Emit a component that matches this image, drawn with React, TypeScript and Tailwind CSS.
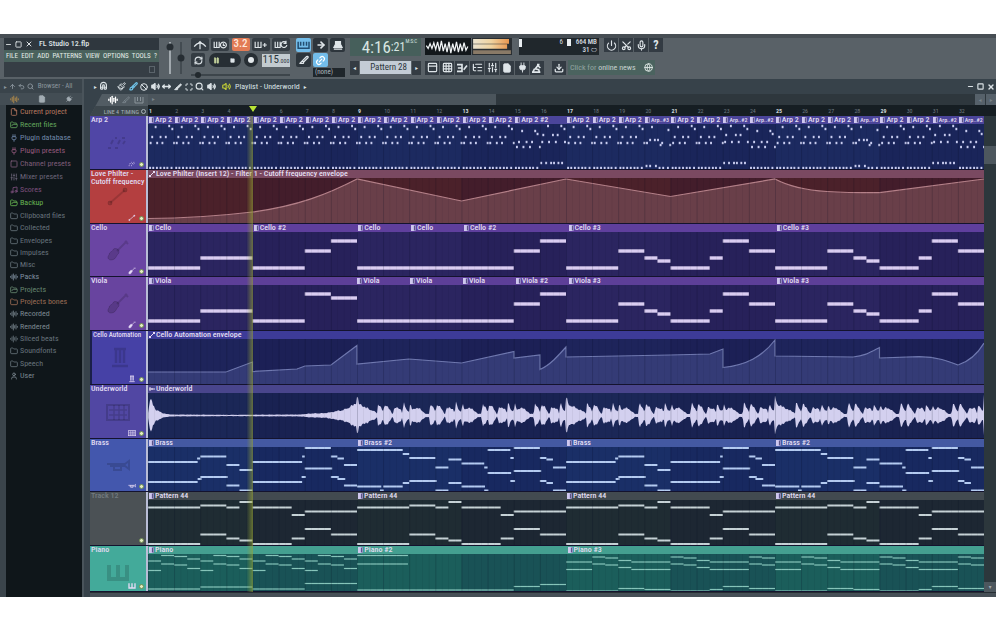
import type { ReactNode } from "react";
import {
  ArrowRight, AudioLines, Ban, Brush, Download, File, Folder, FolderOpen, Globe, Link2, Magnet, Maximize,
  Mic, MoveHorizontal, Music, Paintbrush, Pause, Plug, Power, RefreshCw, Scissors, Search, Slice,
  SlidersVertical, Square, Undo2, User, Volume2, ListTree, PanelTop, Grid3x3, ArrowUp, Minus, X,
} from "lucide-react";

const BAR = 26.125;
const LANE = BAR * 32;

type Note = [number, number, number];
type Clip = [string, number];

const shift = (notes: Note[], by: number): Note[] => notes.map(([a, b, y]) => [a + by, b + by, y]);

const stringTail: Note[] = [
  [16, 18, 36], [18, 19, 19], [19, 19.5, 26], [19.5, 20, 29], [20, 21.5, 36], [21.5, 22, 26], [22, 23, 9], [23, 24, 19],
];
const strings: Note[] = [
  [0, 2, 36], [2, 4, 26], [4, 6, 36], [6, 7, 19], [7, 8, 9], [8, 14, 36], [14, 15, 19], [15, 16, 9],
  ...stringTail, ...shift(stringTail, 8),
];
const viola: Note[] = strings.map(([a, b, y]) => (a === 6 ? [a, b, 9] : a === 7 ? [a, b, 13] : [a, b, y]));

const brassA: Note[] = [
  [0, 1.9, 15], [1.88, 2, 11.5], [2, 3, 9.5], [3, 3.5, 18], [3.5, 4, 23], [4, 5.9, 15], [5.9, 6, 9.5], [6, 7, 1],
  [7, 7.25, 9.5], [7.25, 7.5, 11.5], [7.5, 8, 18], [0, 1.9, 35], [1.9, 2.05, 32], [2, 3.05, 30], [3, 3.5, 38.5],
  [3.5, 4, 43.5], [4, 5.9, 35], [5.88, 6.04, 30], [6, 7.05, 21.5], [7, 7.3, 30], [7.25, 7.55, 32], [7.5, 8, 38.5],
];
const brassB: Note[] = [
  [0, 1.75, 3], [1.75, 2, 7], [2, 3, 11], [3, 3.5, 20.5], [3.5, 4, 12.5], [4, 4.87, 16.5], [4.87, 5, 20.5], [5, 5.87, 3],
  [5.87, 6, 11], [6, 7, 1], [7, 7.25, 11], [7.25, 7.5, 12.5], [7.5, 8, 20.5], [0, 0.93, 39.5], [0.88, 1.03, 43.5],
  [1, 1.75, 39.5], [1.75, 2, 36], [2, 3.05, 34], [3, 3.5, 43.5], [3.5, 4, 36], [4, 4.9, 39.5], [4.87, 5.03, 43.5],
  [5, 5.9, 26], [5.87, 6.05, 34], [6, 7.05, 24], [7, 7.25, 34], [7.25, 7.5, 36], [7.5, 8, 43.5],
];
const brass = [...brassA, ...shift(brassB, 8), ...shift(brassA, 16), ...shift(brassB, 24)];

const horns: Note[] = [
  [0, 2, 7.5], [2, 3, 5.5], [3, 3.5, 7.5], [3.5, 4, 2], [4, 5.5, 7.5], [5.5, 6, 15], [6, 8, 11.5],
  [0, 2, 44], [2, 3, 34.5], [3, 3.5, 38.5], [3.5, 4, 40.5], [4, 5.5, 44], [5.5, 6, 38.5], [6, 7, 29], [7, 8, 34.5],
];
const pattern44 = [0, 8, 16, 24].flatMap((b) => shift(horns, b));

const pianoA: Note[] = [
  [0, 0.5, 7], [0.5, 1, 1.5], [1, 1.5, 2.5], [1.5, 2, 5], [0, 0.5, 16.5], [0.5, 1, 10], [1, 1.5, 11], [1.5, 2, 14.5],
];
const pianoB: Note[] = [
  [0, 1, 8], [1, 1.5, 3], [1.5, 2, 4], [2, 2.5, 6.5], [2.5, 4, 8], [4, 4.5, 3], [4.5, 5, 4], [5, 5.5, 6.5], [5.5, 7, 8],
  [7, 7.5, 3], [7.5, 8, 4], [0, 1, 15.5], [1, 1.5, 10], [1.5, 2, 11], [2, 2.5, 13.5], [2.5, 4, 15.5], [4, 4.5, 10],
  [4.5, 5, 11], [5, 5.5, 13.5], [5.5, 7, 15.5], [7, 7.5, 10], [7.5, 8, 11], [0, 2, 37], [2, 3, 34.5], [3, 4, 35.5],
  [4, 5.5, 37], [5.5, 6, 35.5], [6, 7, 32.5], [7, 8, 34.5],
];
const piano: Note[] = [
  ...[0, 2, 4, 6].flatMap((b) => shift(pianoA, b)),
  [0, 2, 35], [2, 4, 33], [4, 6, 35], [6, 8, 29.5], [6, 7, 37.5],
  [8, 9.95, 1.5], [8, 9.95, 10], [8, 14, 36], [14, 15, 32.5], [15, 16, 30.5],
  ...shift(pianoB, 16), ...shift(pianoB, 24),
];

type Dot = [number, number];
const low = [0.06, 0.18, 0.32, 0.46, 0.6, 0.72, 0.88].map((x): Dot => [x, 43]);
const arpDots: Record<string, Dot[]> = {
  a: [[0.27, 2], [0.79, 1], [0.91, 4], [0.14, 12], [0.46, 12], [0.66, 12], [0.08, 18], [0.33, 18], [0.53, 18], [0.98, 18], ...low],
  b: [[0.1, 22], [0.18, 17], [0.3, 6], [0.35, 22], [0.47, 17], [0.6, 22], [0.68, 17], [0.8, 6], [0.89, 9], [0.98, 22], ...low],
  c: [[0.07, 17], [0.11, 10], [0.29, 1], [0.33, 17], [0.48, 10], [0.59, 17], [0.66, 10], [0.8, 1], [0.92, 4], [0.94, 17],
    [0.03, 38], [0.22, 38], [0.41, 38], [0.52, 38], [0.69, 38], [0.83, 38]],
  d: [[0.08, 18], [0.2, 15], [0.38, 15], [0.5, 15], [0.6, 20], [0.66, 18], [0.27, 2], [0.9, 5], [0.97, 20],
    [0.06, 41], [0.2, 41], [0.42, 41], [0.56, 43], [0.7, 43], [0.88, 43]],
};
const arpOrder = "aaaaaaaaaaaaaabcaaadaacbaaadaacb";

const arpClips: Clip[] = [
  ...Array.from({ length: 14 }, (): Clip => ["Arp 2", 1]), ["Arp 2 #2", 2],
  ...["Arp 2", "Arp 2", "Arp 2", "Arp..#3", "Arp 2", "Arp 2", "Arp..#2", "Arp..#2",
    "Arp 2", "Arp 2", "Arp 2", "Arp..#3", "Arp 2", "Arp 2", "Arp..#2", "Arp..#2"].map((n): Clip => [n, 1]),
];

const bx = (b: number) => b * BAR;

function Notes({ notes, color, size }: { notes: Note[]; color: string; size: number }) {
  return (
    <g fill={color}>
      {notes.map(([a, b, y], i) => (
        <rect key={i} x={bx(a)} y={y - size / 2} width={bx(b - a)} height={size} />
      ))}
    </g>
  );
}

function ArpNotes() {
  return (
    <g fill="#c9cdf0">
      {arpOrder.split("").flatMap((k, bar) =>
        arpDots[k].map(([x, y], i) => <rect key={bar + "-" + i} x={bx(bar + x) - 0.4} y={y - 0.2} width={1.9} height={2.4} />),
      )}
    </g>
  );
}

function Envelope({ d, fill, stroke }: { d: string; fill: string; stroke: string }) {
  return (
    <g>
      <path d={d + " V46 H0 Z"} fill={fill} />
      <path d={d} fill="none" stroke={stroke} strokeWidth="1.2" />
    </g>
  );
}

const filterCurve = "M0 40.5 C45 40.3 75 37.5 104.5 34 C150 28 180 16 209 1 L313.5 23 L418 1 L522.5 18.5 L627 1 C640 8 655 12 679 13.5 C700 14.8 715 14.7 731.5 14.7 L836 1";
const celloCurve =
  "M0 33 H78 L104.5 23 V32.5 L149 30 L157 27 L183 26 L209 6.5 V25 L261 20 L313.5 24 L366 12.5 V19 L392 16 V30.5 C402 26 410 17 418 8 V18 L522 16 L562 15 L575 10 V28.5 C598 26 614 18 627 1 V17 L705 18 C717 17 723 13 731.5 8.5 V19 L771 17.7 C790 18 800 22 810 26 C822 22 830 14 836 4";

const beat: Dot[] = [
  [0, 5], [3, 12], [9, 6], [18, 8], [32, 7], [50, 1.5], [60, 2], [63, 13], [72, 8], [79, 4], [83, 12], [95, 8],
  [107, 1], [112, 8], [131, 7.5], [136, 2], [140, 13], [149, 6], [157, 4],
];
const intro: Dot[] = [
  [0, 3], [0.08, 17], [0.15, 14], [0.3, 6], [0.6, 2], [0.9, 1], [3, 0.7], [5.8, 1], [6.2, 2], [6.8, 2.5], [7.1, 4],
  [7.5, 6], [7.8, 10], [8, 14],
];
const lerp = (pts: Dot[], x: number) => {
  const i = Math.max(1, pts.findIndex((p) => p[0] >= x));
  const [x0, y0] = pts[i - 1];
  const [x1, y1] = pts[i];
  return y0 + ((x - x0) / (x1 - x0)) * (y1 - y0);
};
const wave = (() => {
  const top: string[] = [];
  const bottom: string[] = [];
  for (let i = 0; i <= LANE; i++) {
    const b = i / BAR;
    let amp = b < 8 ? lerp(intro, b) : lerp(beat, ((b - 8) % 2) * 78.4);
    const hit = (b % 8) * 78.4;
    if (b >= 8 && hit < 60) amp = Math.max(amp, hit < 6 ? 20 - hit : 13 - hit * 0.17);
    const jitter = 0.84 + 0.26 * Math.abs(Math.sin(i * 12.9898) * Math.cos(i * 4.1));
    const a = amp * jitter;
    top.push(i + " " + (22.5 - a).toFixed(1));
    bottom.unshift(i + " " + (22.5 + a * 0.95).toFixed(1));
  }
  return "M" + top.join("L") + "L" + bottom.join("L") + "Z";
})();

type GlyphKind = "notes" | "line" | "violin" | "stand" | "steps" | "horn" | "keys" | "none";

function Glyph({ kind, className }: { kind: GlyphKind; className: string }) {
  const shapes: Record<GlyphKind, ReactNode> = {
    notes: <path d="M2 17h3M5 13l2-4M9 17h3M12 13l2-4M9 7h2M16 7h3M17 13l2-3" strokeWidth="2" />,
    line: <><path d="M4 18L19 5" strokeWidth="2" /><circle cx="4" cy="18" r="2" fill="currentColor" /><circle cx="19" cy="5" r="2" fill="currentColor" /></>,
    violin: <><path d="M11 12L21 2M19 2l3 3" strokeWidth="2" /><path d="M3 16c0-3 3-3 4-5 1-3 6-1 6 1 0 3-1 3-2 4-1 3-3 5-6 5s-4-3-2-5z" fill="currentColor" /></>,
    stand: <path d="M8 3v14M12 3v14M16 3v14M4 20h16M6 3h12" strokeWidth="2.5" />,
    steps: <><rect x="1" y="5" width="22" height="15" strokeWidth="2" /><path d="M3 10h18M3 15h18M8 5v15M13 5v15M18 5v15" strokeWidth="1.5" /></>,
    horn: <path d="M1 10h18l4-3v8l-4-3H4M8 10v6h7v-6" strokeWidth="2" />,
    keys: <path d="M3 4v14h18V4M12 4v14" strokeWidth="4" />,
    none: null,
  };
  return <svg viewBox="0 0 24 24" fill="none" stroke="currentColor" className={className} aria-hidden="true">{shapes[kind]}</svg>;
}

type TrackData = {
  name: string; glyph: GlyphKind; height: string; head: string; strip: string; lane: string; mark: "clip" | "line" | "wave";
  clips: Clip[]; indent?: boolean; dim?: boolean; body: ReactNode; bodyHeight: number;
};

const tracks: TrackData[] = [
  { name: "Arp 2", glyph: "notes", height: "h-[54px]", head: "bg-[#5046a6]", strip: "bg-[#4b459a]", lane: "bg-[#1c2a60]", mark: "clip", clips: arpClips, body: <ArpNotes />, bodyHeight: 46 },
  { name: "Love Philter - Cutoff frequency", glyph: "line", height: "h-[54px]", head: "bg-[#b43f40]", strip: "bg-[#7a4961]", lane: "bg-[#4b212a]", mark: "line", clips: [["Love Philter (Insert 12) - Filter 1 - Cutoff frequency envelope", 32]], body: <Envelope d={filterCurve} fill="#693f49" stroke="#b58189" />, bodyHeight: 46 },
  { name: "Cello", glyph: "violin", height: "h-[53px]", head: "bg-[#6a45a3]", strip: "bg-[#5f3f9d]", lane: "bg-[#2b2560]", mark: "clip", clips: [["Cello", 4], ["Cello #2", 4], ["Cello", 2], ["Cello", 2], ["Cello #2", 4], ["Cello #3", 8], ["Cello #3", 8]], body: <Notes notes={strings} color="#dacdf1" size={3.4} />, bodyHeight: 45 },
  { name: "Viola", glyph: "violin", height: "h-[54px]", head: "bg-[#68449f]", strip: "bg-[#5d3f98]", lane: "bg-[#2b2560]", mark: "clip", clips: [["Viola", 8], ["Viola", 2], ["Viola", 2], ["Viola", 2], ["Viola #2", 2], ["Viola #3", 8], ["Viola #3", 8]], body: <Notes notes={viola} color="#dacdf1" size={3.4} />, bodyHeight: 46 },
  { name: "Cello Automation", glyph: "stand", height: "h-[54px]", head: "bg-[#4641a6]", strip: "bg-[#3d3b98]", lane: "bg-[#1e245b]", mark: "line", indent: true, clips: [["Cello Automation envelope", 32]], body: <Envelope d={celloCurve} fill="#343b76" stroke="#7079b0" />, bodyHeight: 46 },
  { name: "Underworld", glyph: "steps", height: "h-[54px]", head: "bg-[#5147a3]", strip: "bg-[#49458c]", lane: "bg-[#1b2757]", mark: "wave", clips: [["Underworld", 32]], body: <path d={wave} fill="#d3d0ef" />, bodyHeight: 46 },
  { name: "Brass", glyph: "horn", height: "h-[53px]", head: "bg-[#4357ad]", strip: "bg-[#4459a2]", lane: "bg-[#1a2f67]", mark: "clip", clips: [["Brass", 8], ["Brass #2", 8], ["Brass", 8], ["Brass #2", 8]], body: <Notes notes={brass} color="#b4cbf1" size={2} />, bodyHeight: 45 },
  { name: "Track 12", glyph: "none", height: "h-[54px]", head: "bg-[#4b5155]", strip: "bg-[#424a50]", lane: "bg-[#1f2c33]", mark: "clip", dim: true, clips: [["Pattern 44", 8], ["Pattern 44", 8], ["Pattern 44", 8], ["Pattern 44", 8]], body: <Notes notes={pattern44} color="#c6d2d6" size={2} />, bodyHeight: 46 },
  { name: "Piano", glyph: "keys", height: "h-[46px]", head: "bg-[#43aa9a]", strip: "bg-[#449f90]", lane: "bg-[#1b5e5b]", mark: "clip", clips: [["Piano", 8], ["Piano #2", 8], ["Piano #3", 16]], body: <Notes notes={piano} color="#86c5ba" size={1.2} />, bodyHeight: 38 },
];

function ClipMark({ kind }: { kind: TrackData["mark"] }) {
  if (kind === "line") return <svg viewBox="0 0 6 6" className="size-[6px] shrink-0" aria-hidden="true"><path d="M1 5L5 1" stroke="#e8dcf0" /><path d="M0 4h2v2H0zM4 0h2v2H4z" fill="#e8dcf0" /></svg>;
  if (kind === "wave") return <svg viewBox="0 0 6 6" className="size-[6px] shrink-0" aria-hidden="true"><path d="M0 3h6M1 1v4M3 2v2" stroke="#e8dcf0" /></svg>;
  return <svg viewBox="0 0 5 6" className="h-[6px] w-[5px] shrink-0" aria-hidden="true"><path d="M0 0h3v6H0z" fill="#cfc8ee" /><path d="M3 .5h1.500v5h-1.500z" fill="#2a2350" stroke="#a79fd6" strokeWidth=".8" /></svg>;
}

function Track({ t }: { t: TrackData }) {
  return (
    <section className={`flex ${t.height} border-b border-[#14132e]`} aria-label={t.name}>
      <div className="flex w-14 shrink-0 bg-[#1a1f4a]">
        <div className={`relative flex min-w-0 flex-1 flex-col ${t.head} ${t.indent ? "ml-[2px]" : ""}`}>
          <span className={`px-px leading-[8px] font-medium ${t.dim ? "text-[#737b80]" : "text-[#e0dbf2]"} ${t.indent ? "text-[7px] whitespace-nowrap" : "text-[8px]"}`}>{t.name}</span>
          <Glyph kind={t.glyph} className="absolute top-[15px] left-4 size-6 text-black/15" />
          <div className="mt-auto flex items-center justify-end gap-[3px] pr-[2px] pb-px">
            <Glyph kind={t.glyph} className="size-2 text-[#e5daf5]" />
            <button aria-label={`Mute ${t.name}`} className="size-[5px] rounded-full border border-[#6f8f52] bg-[#e6ecc4]" />
          </div>
        </div>
      </div>
      <div className="w-[2px] shrink-0 bg-[#b9bdd6]" />
      <div className={`flex min-w-0 flex-1 flex-col ${t.lane}`}>
        <div className={`flex h-2 shrink-0 ${t.strip}`}>
          {t.clips.map(([name, bars], i) => (
            <div key={i} style={{ flexGrow: bars }} className="flex min-w-0 basis-0 items-center gap-px pl-px text-[8px] leading-[8px] font-medium whitespace-nowrap text-[#e3dff2]">
              <ClipMark kind={t.mark} />
              <span className={name.includes("..") ? "text-[6px]" : ""}>{name}</span>
            </div>
          ))}
        </div>
        <svg viewBox={`0 0 ${LANE} ${t.bodyHeight - 1}`} preserveAspectRatio="none" className="min-h-0 w-full flex-1" aria-hidden="true">
          {[4, 12, 20, 28].map((b) => <rect key={b} x={bx(b)} width={bx(4)} height="46" fill="#100a38" fillOpacity=".13" />)}
          {t.body}
          {Array.from({ length: 128 }, (_, i) => (
            <rect key={i} x={bx(i / 4)} width={i % 4 ? 0.5 : 0.9} height="46" fill="#060820" fillOpacity={i % 4 ? 0.1 : 0.2} />
          ))}
        </svg>
      </div>
    </section>
  );
}

const places: [string, typeof Folder, string][] = [
  ["Current project", File, "text-[#b5775f]"], ["Recent files", FolderOpen, "text-[#62a45c]"],
  ["Plugin database", Plug, "text-[#6f87a8]"], ["Plugin presets", Plug, "text-[#93597c]"],
  ["Channel presets", Square, "text-[#7d5c78]"], ["Mixer presets", SlidersVertical, "text-[#6a6478]"],
  ["Scores", Music, "text-[#7c4f7c]"], ["Backup", FolderOpen, "text-[#66b552]"],
];
const folders: [string, typeof Folder, string][] = [
  ["Clipboard files", Folder, "text-[#66727a]"], ["Collected", Folder, "text-[#66727a]"], ["Envelopes", Folder, "text-[#66727a]"],
  ["Impulses", Folder, "text-[#66727a]"], ["Misc", Folder, "text-[#66727a]"], ["Packs", AudioLines, "text-[#8090a0]"],
  ["Projects", FolderOpen, "text-[#65856f]"], ["Projects bones", Folder, "text-[#9a6c55]"], ["Recorded", AudioLines, "text-[#7b8890]"],
  ["Rendered", AudioLines, "text-[#7b8890]"], ["Sliced beats", AudioLines, "text-[#66727a]"], ["Soundfonts", Folder, "text-[#66727a]"],
  ["Speech", Folder, "text-[#66727a]"], ["User", User, "text-[#7b8890]"],
];

function Place({ item, row }: { item: [string, typeof Folder, string]; row: string }) {
  const [name, Icon, color] = item;
  return (
    <li className={`${row} ${color}`}>
      <button className="flex h-full items-center gap-[2px] text-[8px] leading-[12px] whitespace-nowrap">
        <Icon size={8} strokeWidth={2.5} />
        {name}
      </button>
    </li>
  );
}

function Tool({ label, className, children }: { label: string; className?: string; children: ReactNode }) {
  return <button aria-label={label} className={`flex items-center justify-center text-[#dfe5e9] ${className ?? "h-[14px] w-[14px] bg-[#333b43]"}`}>{children}</button>;
}

const I = ({ d, w = 1.4, fill }: { d: string; w?: number; fill?: boolean }) => (
  <svg viewBox="0 0 16 12" className="h-[10px] w-[14px]" fill={fill ? "currentColor" : "none"} stroke="currentColor" strokeWidth={w} aria-hidden="true"><path d={d} /></svg>
);

const transport = "h-[13px] w-[18px] rounded-xs bg-[#343c43]";
const snap = "h-[14px] w-[15px] rounded-xs bg-[#2d353c]";
const snapOn = "h-[14px] w-[15px] rounded-xs bg-[#73bdea] text-[#234d70]!";

function Toolbar() {
  return (
    <header className="flex h-[45px] items-start gap-1 border-t-4 border-[#474e54] bg-[#596167] pl-1">
      <div className="flex h-[39px] w-[155px] flex-col bg-[#363e45]">
        <div className="flex h-3 items-center gap-[3px] bg-[#2f373e] pl-px text-[8px] text-[#dfe3e6]">
          <button aria-label="Minimize"><Minus size={7} strokeWidth={3} /></button>
          <button aria-label="Restore"><Square size={7} strokeWidth={3} /></button>
          <button aria-label="Close"><X size={8} strokeWidth={3} /></button>
          <span className="pl-[3px] font-medium">FL Studio 12.flp</span>
        </div>
        <nav className="flex h-3 items-center justify-between bg-[#4a625d] px-[2px] text-[7px] text-[#e3ece8]">
          {["FILE", "EDIT", "ADD", "PATTERNS", "VIEW", "OPTIONS", "TOOLS", "?"].map((m) => <button key={m}>{m}</button>)}
        </nav>
        <div className="mt-auto mr-1 mb-1 h-[7px] w-[6px] self-end border border-[#5b646b]" />
      </div>
      <svg viewBox="0 0 24 39" className="h-[39px] w-6" aria-hidden="true">
        <path d="M7 4v32" stroke="#c9d0d5" strokeWidth="1.3" /><path d="M18 4v32" stroke="#434b51" strokeWidth="2" />
        <circle cx="7" cy="9" r="3.5" fill="#262d33" /><circle cx="18" cy="20" r="3.5" fill="#262d33" />
      </svg>
      <div className="flex w-[99px] flex-col gap-[2px]">
        <div className="flex justify-between">
          <Tool label="Metronome" className={transport}><I d="M1 8q7-9 14 0M8 2v9M5 5l3-3 3 3" /></Tool>
          <Tool label="Wait for input" className={transport}><I d="M1 2v7h6V2M4 2v7M12 2.500a3.500 3.500 0 1 0 .1 0M12 4v2.500h2" /></Tool>
          <Tool label="Countdown" className="h-[13px] w-[18px] rounded-xs bg-[#e27b55] text-[11px] font-medium text-[#ffe9dc]">3.2</Tool>
          <Tool label="Blend recording" className={transport}><I d="M1 2v7h7V2M4.500 2v7M10 6h5M12.500 3.500v5" /></Tool>
          <Tool label="Loop recording" className={transport}><I d="M1 2v7h6V2M4 2v7M14 3a3.500 3.500 0 1 0 1 3M14 1v3h-3" /></Tool>
        </div>
        <div className="flex items-center justify-between">
          <Tool label="Song mode" className="h-[14px] w-[14px] rounded-xs bg-[#343c43]"><RefreshCw size={9} strokeWidth={3} /></Tool>
          <div className="flex rounded-full bg-[#272e34]">
            <Tool label="Pause" className="h-[14px] w-4 text-[#c9d7a0]!"><Pause size={7} fill="currentColor" /></Tool>
            <Tool label="Stop" className="h-[14px] w-4"><Square size={5} fill="currentColor" /></Tool>
          </div>
          <Tool label="Record" className="h-[14px] w-[14px] rounded-full bg-[#272e34]"><span className="size-[6px] rounded-full bg-[#e4e9ec]" /></Tool>
          <div className="flex h-[13px] w-7 items-center justify-center bg-[#c3cbd0] text-[#2c363d]"><span className="text-[11px] leading-3">115</span><span className="text-[6px]">.000</span></div>
        </div>
        <input type="range" aria-label="Song position" defaultValue={4} className="mt-[2px] h-2 w-full appearance-none bg-transparent [&::-webkit-slider-runnable-track]:h-[2px] [&::-webkit-slider-runnable-track]:bg-[#3d454b] [&::-webkit-slider-thumb]:-mt-[2px] [&::-webkit-slider-thumb]:size-[6px] [&::-webkit-slider-thumb]:appearance-none [&::-webkit-slider-thumb]:rounded-full [&::-webkit-slider-thumb]:bg-[#22292e]" />
      </div>
      <div className="ml-[2px] grid w-[50px] grid-cols-[15px_15px_15px] gap-x-[2px] gap-y-px">
        <Tool label="Typing keyboard" className={snapOn}><I d="M1 2v8h13V2M4 2v5M7.500 2v5M11 2v5" w={1.8} /></Tool>
        <Tool label="Step" className={snap}><ArrowRight size={10} strokeWidth={4} /></Tool>
        <Tool label="Main snap" className={snap}><I d="M5 2h6v3l2 4H3l2-4zM3 11h10" fill /></Tool>
        <Tool label="Scroll" className={snap}><Slice size={10} strokeWidth={3} /></Tool>
        <Tool label="Link" className={snapOn}><Link2 size={11} strokeWidth={2.5} className="-rotate-45 text-white" /></Tool>
        <span />
        <span />
        <select aria-label="Snap" className="col-span-2 h-[9px] w-8 appearance-none bg-[#1f262b] pl-[2px] text-[7px] leading-[9px] text-[#aeb7bd]"><option>(none)</option></select>
      </div>
      <div className="flex w-[71px] flex-col gap-1">
        <div className="flex h-[18px] items-center justify-end bg-[#465f5b] pr-1 text-[#d8e6e2]">
          <span className="text-[17px] leading-[18px]">4:16</span><span className="text-[12px] leading-[18px]">:21</span><span className="self-start text-[5px] leading-[6px]">M:S:C</span>
        </div>
        <div className="flex h-[15px] items-center gap-px">
          <Tool label="Previous pattern" className="h-[14px] w-[9px] bg-[#343c43] text-[6px]">◂</Tool>
          <select aria-label="Pattern" className="h-[13px] min-w-0 flex-1 appearance-none bg-[#c3ccd5] pr-1 text-right text-[9px] leading-[13px] text-[#2c363d]"><option>Pattern 28</option></select>
          <Tool label="Next pattern" className="h-[14px] w-[9px] bg-[#343c43] text-[6px]">▸</Tool>
        </div>
      </div>
      <div className="flex flex-col gap-1">
        <div className="flex h-[18px] gap-px">
          <svg viewBox="0 0 46 18" className="h-[17px] w-[46px] bg-[#12171b]" aria-label="Oscilloscope"><path d="M0 8l2 3 2-5 2 5 2-6 2 7 2-8 2 10 2-11 2 11 2-8 2 9 2-11 2 12 2-10 2 8 2-10 2 11 2-9 2 8 2-9 2 8 2-4" fill="none" stroke="#f1f4f6" strokeWidth="1.3" /></svg>
          <svg viewBox="0 0 40 18" className="h-[17px] w-[40px] bg-[#2a2f33]" aria-label="Peak meter">
            <defs><linearGradient id="peak"><stop offset="0" stopColor="#ebe3cf" /><stop offset=".5" stopColor="#efd3a0" /><stop offset="1" stopColor="#e8964f" /></linearGradient></defs>
            <path d="M0 1h38v5H0zM0 6.500h36v5H0z" fill="url(#peak)" /><path d="M0 13h40v4H0z" fill="#8a7a67" />
          </svg>
          <div className="ml-[6px] flex h-[17px] w-20 bg-[#20272c] text-[7px] leading-[8px] text-[#d9dfe3]">
            <span className="mt-px h-2 w-[3px] bg-[#e9eef1]" />
            <span className="ml-auto pr-1">6</span>
            <span className="mt-px h-[7px] w-1 bg-[#e9eef1]" />
            <span className="flex w-7 flex-col pr-[2px] text-right font-medium whitespace-nowrap"><span>664 MB</span><span>31 ⬭</span></span>
          </div>
          <div className="ml-1 flex gap-px">
            <Tool label="Power"><Power size={11} strokeWidth={2.5} /></Tool>
            <Tool label="Cut"><Scissors size={11} strokeWidth={2.5} className="-rotate-90" /></Tool>
            <Tool label="Microphone"><Mic size={11} strokeWidth={2.5} /></Tool>
            <Tool label="Help"><span className="text-[12px] font-bold">?</span></Tool>
          </div>
        </div>
        <div className="flex h-[15px] items-center">
          <div className="flex gap-px">
            <Tool label="Playlist"><PanelTop size={11} strokeWidth={2.5} /></Tool>
            <Tool label="Channel rack"><Grid3x3 size={11} strokeWidth={2.5} /></Tool>
            <Tool label="Piano roll"><I d="M2 2h6v8H2M3 6h5M10 8l4-5" w={2} /></Tool>
            <Tool label="Browser"><ListTree size={11} strokeWidth={2.5} /></Tool>
            <Tool label="Mixer"><SlidersVertical size={11} strokeWidth={2.5} /></Tool>
            <Tool label="Project picker"><File size={10} fill="currentColor" /></Tool>
            <Tool label="Plugin picker"><Plug size={11} fill="currentColor" /></Tool>
            <Tool label="Tempo tapper"><I d="M8 2h3M9 3L6 7l4 1 1 3M5 7l-2 4M9 3l3 3M2 11h10" w={2} /></Tool>
          </div>
          <Tool label="Download" className="ml-2 h-[14px] w-[14px] bg-[#333b43]"><Download size={10} strokeWidth={3} /></Tool>
          <a href="#news" className="ml-[2px] flex h-[15px] w-[87px] items-center justify-between bg-[#4b635f] px-[2px] text-[8px] whitespace-nowrap text-[#93a5a1]">
            <span>Click for <span className="text-[#c5d1ce]">online news</span></span><Globe size={9} strokeWidth={2.5} className="text-[#dbe4e1]" />
          </a>
        </div>
      </div>
    </header>
  );
}

function Browser() {
  return (
    <aside className="flex w-[84px] shrink-0 flex-col border-r-2 border-[#4a545b] bg-[#3a444b]">
      <div className="flex h-[14px] items-center gap-[2px] pl-1 text-[7px] text-[#8b969e]">
        <span className="text-[6px]">▸</span><ArrowUp size={7} strokeWidth={3} /><Undo2 size={7} strokeWidth={3} /><Search size={7} strokeWidth={3} />
        <span className="pl-[2px]">Browser - All</span>
      </div>
      <div className="flex h-3 items-center justify-around bg-[#434d54] text-[#a3adb4]">
        <AudioLines size={9} strokeWidth={2.5} className="text-[#b08a4b]" /><File size={8} fill="currentColor" /><Plug size={8} fill="currentColor" className="rotate-45" />
      </div>
      <nav className="ml-[6px] flex-1 bg-[#0f161a] pl-1" aria-label="Browser">
        <ul>{places.map((p) => <Place key={p[0]} item={p} row="h-[13px]" />)}</ul>
        <ul className="mt-px flex h-[172px] flex-col justify-between">{folders.map((p) => <Place key={p[0]} item={p} row="h-3" />)}</ul>
      </nav>
    </aside>
  );
}

function Playlist() {
  return (
    <main className="flex min-w-0 flex-1 flex-col bg-[#37424a] pl-[6px]">
      <div className="flex h-[15px] items-center pr-px pl-1 text-[#dbe2e6]">
        <div className="flex w-[122px] items-center justify-between">
          <span className="text-[6px]">▸</span>
          <Magnet size={9} strokeWidth={3} className="mr-[6px] -rotate-45" />
          <Paintbrush size={9} strokeWidth={2.5} /><Brush size={9} strokeWidth={3} className="text-[#6fc1e6]" />
          <Ban size={8} strokeWidth={3} /><Volume2 size={9} strokeWidth={3} fill="currentColor" /><MoveHorizontal size={9} strokeWidth={4} />
          <Slice size={8} strokeWidth={3} fill="currentColor" /><Maximize size={8} strokeWidth={3} /><Search size={9} strokeWidth={3} /><Volume2 size={9} strokeWidth={3} fill="currentColor" />
        </div>
        <Volume2 size={9} strokeWidth={3} className="mr-1 ml-[6px] text-[#c3cf35]" />
        <h1 className="text-[8px] leading-3">Playlist - Underworld</h1><span className="pl-1 text-[6px]">▸</span>
        <div className="ml-auto flex gap-[3px]">
          <button aria-label="Minimize"><Minus size={7} strokeWidth={4} /></button><button aria-label="Maximize"><Square size={7} strokeWidth={4} /></button><button aria-label="Close"><X size={8} strokeWidth={4} /></button>
        </div>
      </div>
      <div className="flex h-[22px]">
        <div className="flex w-[58px] flex-col bg-[#525c63] [clip-path:polygon(12px_0,100%_0,100%_100%,0_100%)]">
          <div className="flex h-3 items-center justify-end gap-1 pr-1 text-[#8a949b]">
            <AudioLines size={10} strokeWidth={3} className="text-white" /><Slice size={8} strokeWidth={2} />
            <svg viewBox="0 0 10 8" className="h-2 w-[10px]" fill="none" stroke="currentColor" aria-hidden="true"><path d="M1 1v6h8V1M3.500 1v4M6.500 1v4" /></svg>
          </div>
          <div className="flex h-[10px] items-center justify-end gap-[2px] bg-[#3c464c] pr-[2px] text-[6px] text-[#a9b3b9]"><span>LINE 4</span><span>TIMING</span><span className="size-[5px] rounded-full border border-[#a9b3b9]" /></div>
        </div>
        <div className="flex min-w-0 flex-1 flex-col">
          <div className="flex h-[11px] bg-[#2e373d] text-[6px] text-[#79848b]">
            <div className="w-[41%] bg-[#4b555c] pl-1">▸</div>
            <div className="ml-auto flex gap-px">
              <button aria-label="Scroll left" className="w-[10px] bg-[#56616a]">◂</button><button aria-label="Scroll right" className="w-[10px] bg-[#56616a]">▸</button>
            </div>
          </div>
          <div className="flex h-[11px] bg-[#161e23] pr-3 text-[6px]">
            {Array.from({ length: 32 }, (_, i) => (
              <div key={i} className={`relative min-w-0 flex-1 basis-0 pl-px leading-[11px] ${i % 4 === 0 ? "font-bold text-[#cdd5da]" : "text-[#6f7a81]"}`}>
                {i === 4 ? <svg viewBox="0 0 8 6" className="absolute top-px -left-1 h-[6px] w-2" aria-label="Playhead"><path d="M0 0h8L4 6z" fill="#b8e336" /></svg> : i + 1}
              </div>
            ))}
          </div>
        </div>
      </div>
      <div className="flex">
        <div className="relative flex min-w-0 flex-1 flex-col">
          {tracks.map((t) => <Track key={t.name} t={t} />)}
          <div className="pointer-events-none absolute inset-y-0 right-0 left-[58px]">
            <div className="absolute inset-y-0 left-[12.5%] w-[6px] -translate-x-full bg-gradient-to-r from-[#8fa33a]/5 to-[#98a534]/60" />
          </div>
        </div>
        <div className="flex w-3 flex-col bg-[#2c373c]">
          <div className="mt-[30px] h-[18px] w-full bg-[#4d575e]" />
          <button aria-label="Scroll down" className="mt-auto h-[10px] bg-[#4d575e] text-[6px] leading-[10px] text-[#a0a9af]">▾</button>
        </div>
      </div>
      <div className="h-[5px] border-t border-[#252d32] bg-[#464f56]" />
    </main>
  );
}

export default function App() {
  return (
    <div className="min-h-screen bg-white py-[34px] font-['Roboto_Condensed','DejaVu_Sans_Condensed',sans-serif]">
      <Toolbar />
      <div className="flex">
        <Browser />
        <Playlist />
      </div>
    </div>
  );
}
